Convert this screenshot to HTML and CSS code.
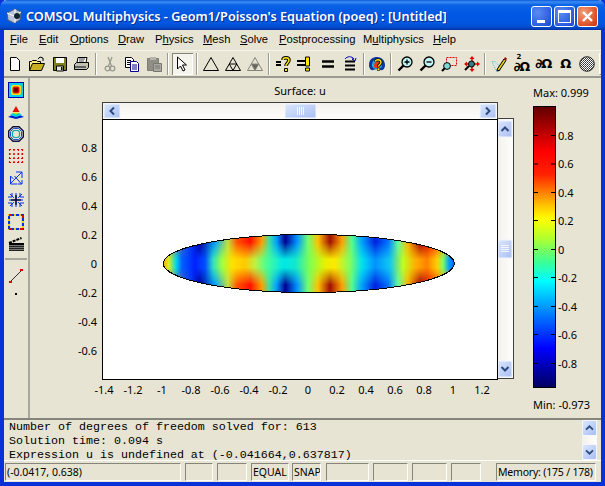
FILE: index.html
```html
<!DOCTYPE html>
<html lang="en">
<head>
<meta charset="utf-8">
<title>COMSOL Multiphysics</title>
<link rel="stylesheet" href="styles.css">
</head>
<body>
<div class="window">
  <header class="titlebar">
    <svg class="appicon" viewBox="0 0 16 16"><path d="M1 5 9 1l6 3-1 8-6 3-6-3z" fill="#b8c4d8" stroke="#50607a"/><path d="M9 1v14M1 5l7 3 7-4" stroke="#fff" fill="none"/><circle cx="11" cy="8" r="3" fill="#123"/></svg>
    <span class="title">COMSOL Multiphysics - Geom1/Poisson's Equation (poeq) : [Untitled]</span>
    <div class="winbtns">
      <span class="wbtn"><i class="wmin"></i></span>
      <span class="wbtn"><i class="wmax"></i></span>
      <span class="wbtn wclose"><svg viewBox="0 0 21 21"><path d="M6 6l9 9M15 6l-9 9" stroke="#fff" stroke-width="2.4"/></svg></span>
    </div>
  </header>
  <nav class="menubar">
    <span class="mi m1"><u>F</u>ile</span>
    <span class="mi m2"><u>E</u>dit</span>
    <span class="mi m3"><u>O</u>ptions</span>
    <span class="mi m4"><u>D</u>raw</span>
    <span class="mi m5">P<u>h</u>ysics</span>
    <span class="mi m6"><u>M</u>esh</span>
    <span class="mi m7"><u>S</u>olve</span>
    <span class="mi m8"><u>P</u>ostprocessing</span>
    <span class="mi m9">M<u>u</u>ltiphysics</span>
    <span class="mi m10"><u>H</u>elp</span>
  </nav>
  <div class="toolbar">
    <span class="tb"><svg viewBox="0 0 16 16"><path d="M3.500 1.500h6l3 3v10h-9z" fill="#fff" stroke="#000"/></svg></span>
    <span class="tb"><svg viewBox="0 0 16 16"><path d="M.5 14.500v-9h2l1-1h4l1 1h3v2" fill="#ffe97a" stroke="#000"/><path d="M.5 14.500l3-7h12l-3 7z" fill="#c8b020" stroke="#000"/><path d="M9 3l2-2 3 1v3" fill="none" stroke="#000"/></svg></span>
    <span class="tb"><svg viewBox="0 0 16 16"><path d="M1.500 1.500h13v13h-13z" fill="#808020" stroke="#000"/><path d="M4 2h8v5H4z" fill="#fff"/><path d="M4.500 10h7v5h-7z" fill="#e8e8d8" stroke="#000"/><path d="M9 11h1.500v3H9z" fill="#000"/></svg></span>
    <span class="tb"><svg viewBox="0 0 16 16"><path d="M4 1.500h9l-1 5H3z" fill="#fff" stroke="#000"/><path d="M5 3h6M5 5h5" stroke="#444"/><path d="M.5 8.500l2-2h12v5l-2 2h-12z" fill="#c0c0b8" stroke="#000"/><path d="M1 11h11" stroke="#000"/><path d="M12 8h2" stroke="#e0e000"/></svg></span>
    <span class="sep"></span>
    <span class="tb"><svg viewBox="0 0 16 16" fill="none" stroke="#9a9a90" stroke-width="1.300"><path d="M6 1l3.500 9M10 1L6.500 10"/><circle cx="5.500" cy="12.500" r="2.300"/><circle cx="10.500" cy="12.500" r="2.300"/></svg></span>
    <span class="tb"><svg viewBox="0 0 16 16"><path d="M1.500 1.500h6l2 2v8h-8z" fill="#fff" stroke="#000"/><path d="M3 4.500h4M3 6.500h4M3 8.500h4" stroke="#000"/><path d="M6.500 5.500h6l2 2v8h-8z" fill="#fff" stroke="#000080"/><path d="M8 9h5M8 11h5M8 13h5" stroke="#000080"/></svg></span>
    <span class="tb"><svg viewBox="0 0 16 16"><path d="M1.500 2.500h11v12h-11z" fill="#8f8f86" stroke="#7c7c74"/><path d="M4 1h6v3H4z" fill="#b4b4aa"/><path d="M7.500 7.500h8v8h-8z" fill="#aaa9a0" stroke="#77776f"/><path d="M9 10h5M9 12h5" stroke="#77776f"/></svg></span>
    <span class="sep"></span>
    <span class="tb tb-on"><svg viewBox="0 0 16 16"><path d="M3.500 1v12l3-3 2.500 5 2-1-2.500-5h4z" fill="#fff" stroke="#000"/></svg></span>
    <span class="sep"></span>
    <span class="tb"><svg viewBox="0 0 16 16"><path d="M8 1.500 15.500 14.500H.5z" fill="none" stroke="#000"/></svg></span>
    <span class="tb"><svg viewBox="0 0 16 16" fill="none" stroke="#000"><path d="M8 1.500 15.500 14.500H.5z"/><path d="M4.300 8h7.400L8 14.500z"/></svg></span>
    <span class="tb"><svg viewBox="0 0 16 16" stroke="#85857c"><path d="M8 1.500 15.500 14.500H.5z" fill="none"/><path d="M4.300 8h7.400L8 14.500z" fill="#66665e"/></svg></span>
    <span class="sep"></span>
    <span class="tb"><svg viewBox="0 0 16 16"><path d="M1 6h5M1 9h5" stroke="#000" stroke-width="2"/><path d="M8 4c0-3 6-3 6 0 0 3-3 3-3 6" fill="none" stroke="#000" stroke-width="3.500"/><path d="M8 4c0-3 6-3 6 0 0 3-3 3-3 6" fill="none" stroke="#ffe800" stroke-width="1.500"/><path d="M9.500 12.500h3v3h-3z" fill="#ffe800" stroke="#000"/></svg></span>
    <span class="tb"><svg viewBox="0 0 16 16"><path d="M0 5h8M0 9h8" stroke="#000" stroke-width="2"/><path d="M8.500 1h4v9h-4zM8.500 12h4v3h-4z" fill="#ffe800" stroke="#000"/></svg></span>
    <span class="tb"><svg viewBox="0 0 16 16"><path d="M2 5.500h12M2 10.500h12" stroke="#000" stroke-width="2.600"/></svg></span>
    <span class="tb"><svg viewBox="0 0 16 16"><path d="M3 5.500h10M3 9.500h10M3 13.500h10" stroke="#000" stroke-width="1.800"/><path d="M3 3c2-3 7-3 9 0l-2 0 3 2 1-3" fill="none" stroke="#0000c0"/></svg></span>
    <span class="sep"></span>
    <span class="tb"><svg viewBox="0 0 16 16"><path d="M0 9C0 3 4 1 8 1s8 3 8 8c0 3-2 6-4 5l-4-1-4 1C2 15 0 12 0 9z" fill="#0038a8"/><path d="M3 9c0-3 2-6 5-6s5 3 5 6-2 4-5 4-5-1-5-4z" fill="#18b0e0"/><path d="M5 10c0-2 1-5 3-5s3 3 3 5-1 2-3 2-3 0-3-2z" fill="#f03010"/><path d="M6.500 5.500c0-2.500 5.500-2.500 5.500 1 0 2-2.500 2-2.500 4" fill="none" stroke="#000" stroke-width="3"/><path d="M6.500 5.500c0-2.500 5.500-2.500 5.500 1 0 2-2.500 2-2.500 4" fill="none" stroke="#ffe000" stroke-width="1.400"/><path d="M8.300 12h2.500v2.500H8.300z" fill="#ffe000" stroke="#000" stroke-width=".6"/></svg></span>
    <span class="sep"></span>
    <span class="tb"><svg viewBox="0 0 16 16"><circle cx="10" cy="6" r="5" fill="#bff4f4" stroke="#000" stroke-width="1.300"/><path d="M1.500 14.500 6.500 9.500" stroke="#000" stroke-width="2.400"/><path d="M7.500 6h5M10 3.500v5" stroke="#000" stroke-width="1.300"/></svg></span>
    <span class="tb"><svg viewBox="0 0 16 16"><circle cx="10" cy="6" r="5" fill="#bff4f4" stroke="#000" stroke-width="1.300"/><path d="M1.500 14.500 6.500 9.500" stroke="#000" stroke-width="2.400"/><path d="M7.500 6h5" stroke="#000" stroke-width="1.300"/></svg></span>
    <span class="tb"><svg viewBox="0 0 16 16"><path d="M5.500 1.500h10v8h-10z" fill="none" stroke="#e00000" stroke-dasharray="2 1"/><circle cx="6" cy="10" r="3.400" fill="#7fd8d8" stroke="#000"/><path d="M1 15l3-3" stroke="#000" stroke-width="2.200"/></svg></span>
    <span class="tb"><svg viewBox="0 0 16 16"><path d="M8 0 5.500 3h5zM8 16l-2.500-3h5zM0 8l3-2.500v5zM16 8l-3-2.500v5z" fill="#e00000"/><path d="M8 2v12M2 8h12" stroke="#e00000" stroke-width="1.500"/><circle cx="7.500" cy="8" r="3" fill="#3a7a80" stroke="#000"/><path d="M1 14l4-4" stroke="#000" stroke-width="2"/></svg></span>
    <span class="sep"></span>
    <span class="tb"><svg viewBox="0 0 16 16"><path d="M1 5.500l4 9h4l-2-6-3-3z" fill="none" stroke="#30c8d8" stroke-dasharray="1 1"/><path d="M6 13.500 13 3l2 1.500L8 15z" fill="#e8d000" stroke="#000"/><path d="M13 3l1-2 2 1.500-1 2z" fill="#a01010"/><path d="M6 13.500 5.500 15.500 8 15z" fill="#000"/></svg></span>
    <span class="tb tb-n tb-stack"><span class="sup">2</span><span class="glyph gl-low">∂Ω</span></span>
    <span class="tb tb-n"><span class="glyph">∂Ω</span></span>
    <span class="tb tb-n"><span class="glyph">Ω</span></span>
    <span class="tb tb-n"><svg viewBox="0 0 16 16"><defs><pattern id="dots" width="2" height="2" patternUnits="userSpaceOnUse"><rect width="2" height="2" fill="#fff"/><rect width="1" height="1" fill="#333"/><rect x="1" y="1" width="1" height="1" fill="#555"/></pattern></defs><circle cx="8" cy="8" r="7.300" fill="url(#dots)" stroke="#000" stroke-width=".8"/></svg></span>
    <span class="tb-cut"></span>
  </div>
  <div class="middle">
    <aside class="sidebar">
      <span class="sb"><svg viewBox="0 0 16 16"><rect width="16" height="16" fill="#0000b0"/><rect x="1" y="1" width="14" height="14" fill="#00d0e8"/><rect x="3" y="3" width="10" height="10" rx="2" fill="#f0e020"/><rect x="4.500" y="4.500" width="7" height="7" rx="2" fill="#e01000"/><rect x="6" y="6" width="4" height="4" fill="#700000"/></svg></span>
      <span class="sb"><svg viewBox="0 0 16 16"><path d="M0 13 8 15l8-2-4-2H4z" fill="#0020d0"/><path d="M2 11 8 13l6-2-3-2H5z" fill="#00d0e0"/><path d="M4 9h8L8 11z" fill="#40e060"/><path d="M4.500 8.500h7L8 10z" fill="#ffd800"/><path d="M8 2 11.500 8h-7z" fill="#e01000"/></svg></span>
      <span class="sb"><svg viewBox="0 0 16 16" fill="none"><path d="M5 .7h6L15.300 5v6L11 15.300H5L.7 11V5z" stroke="#101040" stroke-width="1.400"/><path d="M5.500 2.500h5l3 3v5l-3 3h-5l-3-3v-5z" stroke="#2050d0"/><path d="M6 4.500h4L11.500 6v4L10 11.500H6L4.500 10V6z" stroke="#10a8a0" stroke-width="1.200"/></svg></span>
      <span class="sb"><svg viewBox="0 0 16 16" fill="none" stroke="#e00000" stroke-width="1.100" stroke-dasharray="2 2"><path d="M1 1.500h14M1 6h14M1 10.500h14M1 14.500h14M1.500 1v14M6 1v14M10.500 1v14M14.500 1v14"/></svg></span>
      <span class="sb"><svg viewBox="0 0 16 16" fill="none" stroke="#0030f0"><path d="M2.500 6v8h7M2 14 14 2M14 2H8M14 2v6M6.500 6l7 8M14 14h-4M14 14v-4M2.500 6l3 3"/></svg></span>
      <span class="sb"><svg viewBox="0 0 16 16" fill="none" stroke="#0030f0"><path d="M1 8h14M8 1v14M2 2l4 4M14 2l-4 4M2 14l4-4M14 14l-4-4M4 1v4H0M12 1v4h4M4 15v-4H0M12 15v-4h4"/><path d="M8 3v10M3 8h10" stroke="#101040" stroke-width="1.600"/></svg></span>
      <span class="sb"><svg viewBox="0 0 16 16" fill="none" stroke-width="2.200" stroke-dasharray="3 2"><path d="M1 1h14v14H1z" stroke="#e8d000"/><path d="M1 1h14v14H1z" stroke="#0030e0" stroke-dashoffset="3"/><path d="M1 1h4M15 1v4M1 15h4M15 15h-4" stroke="#e00000"/></svg></span>
      <span class="sb"><svg viewBox="0 0 16 16"><path d="M1 7 13.500 2" fill="none" stroke="#000" stroke-width="2" stroke-dasharray="3 1"/><path d="M1 7h15v2H1z" fill="#000"/><path d="M1 9h15v6H1z" fill="#777"/><path d="M1 10h15v1H1zM1 12h15v1H1zM1 14h15v1H1z" fill="#222"/></svg></span>
      <span class="sbsep"></span>
      <span class="sb"><svg viewBox="0 0 16 16"><path d="M2 14 14 2" stroke="#000" stroke-width=".8"/><path d="M1 13h3v2H1zM12 1h3v2h-3z" fill="#e00000"/></svg></span>
      <span class="sb sb-dot"><svg viewBox="0 0 16 16"><path d="M7 7h2v2H7z" fill="#000"/></svg></span>
    </aside>
    <main class="canvas">
      <svg class="plot" viewBox="30 78 571 340" role="img">
        <defs>
          <linearGradient id="mid" gradientUnits="userSpaceOnUse" x1="163" x2="454" y1="0" y2="0">
            <stop offset="0" stop-color="#ffa000"/><stop offset=".02" stop-color="#d8f020"/><stop offset=".045" stop-color="#00d8e8"/><stop offset=".065" stop-color="#0060ff"/><stop offset=".11" stop-color="#0020ff"/><stop offset=".145" stop-color="#0050ff"/><stop offset=".172" stop-color="#30e0c0"/><stop offset=".203" stop-color="#a0ff40"/><stop offset=".237" stop-color="#ffe000"/><stop offset=".282" stop-color="#ffc800"/><stop offset=".316" stop-color="#c0f040"/><stop offset=".354" stop-color="#50ff90"/><stop offset=".412" stop-color="#00e8e8"/><stop offset=".454" stop-color="#10e8d0"/><stop offset=".505" stop-color="#80ff50"/><stop offset=".557" stop-color="#e8f000"/><stop offset=".591" stop-color="#ffe800"/><stop offset=".643" stop-color="#80ff60"/><stop offset=".684" stop-color="#00e0f0"/><stop offset=".729" stop-color="#0090ff"/><stop offset=".78" stop-color="#10c8f0"/><stop offset=".825" stop-color="#c0ff20"/><stop offset=".866" stop-color="#ffb000"/><stop offset=".907" stop-color="#ff8000"/><stop offset=".942" stop-color="#ffd000"/><stop offset=".962" stop-color="#80ff60"/><stop offset=".983" stop-color="#00a0ff"/><stop offset="1" stop-color="#0060ff"/>
          </linearGradient>
          <linearGradient id="edge" gradientUnits="userSpaceOnUse" x1="163" x2="454" y1="0" y2="0">
            <stop offset="0" stop-color="#ffa000"/><stop offset=".093" stop-color="#0040ff"/><stop offset=".127" stop-color="#000090"/><stop offset=".179" stop-color="#00a0ff"/><stop offset=".223" stop-color="#c0e040"/><stop offset=".255" stop-color="#ff5000"/><stop offset=".3" stop-color="#ff1000"/><stop offset=".34" stop-color="#ffa000"/><stop offset=".365" stop-color="#40e0a0"/><stop offset=".39" stop-color="#00a0ff"/><stop offset=".42" stop-color="#000090"/><stop offset=".46" stop-color="#0090ff"/><stop offset=".498" stop-color="#70ff70"/><stop offset=".533" stop-color="#ffc000"/><stop offset=".574" stop-color="#a01000"/><stop offset=".615" stop-color="#ffa000"/><stop offset=".649" stop-color="#50ff90"/><stop offset=".684" stop-color="#00a0ff"/><stop offset=".729" stop-color="#0020e0"/><stop offset=".773" stop-color="#0070ff"/><stop offset=".808" stop-color="#60ffa0"/><stop offset=".842" stop-color="#ffb000"/><stop offset=".883" stop-color="#a00000"/><stop offset=".924" stop-color="#ff2000"/><stop offset=".97" stop-color="#ffa000"/><stop offset="1" stop-color="#ffa000"/>
          </linearGradient>
          <linearGradient id="fade" gradientUnits="userSpaceOnUse" x1="0" x2="0" y1="234" y2="293">
            <stop offset=".14" stop-color="#fff"/><stop offset=".43" stop-color="#000"/><stop offset=".57" stop-color="#000"/><stop offset=".86" stop-color="#fff"/>
          </linearGradient>
          <mask id="edgemask" maskUnits="userSpaceOnUse" x="160" y="230" width="300" height="68"><rect x="160" y="230" width="300" height="68" fill="url(#fade)"/></mask>
          <clipPath id="shape"><ellipse cx="308.800" cy="263.500" rx="145.500" ry="29"/></clipPath>
          <linearGradient id="jet" x1="0" x2="0" y1="0" y2="1">
            <stop offset="0" stop-color="#600000"/><stop offset=".16" stop-color="#ff0000"/><stop offset=".24" stop-color="#ff2000"/><stop offset=".35" stop-color="#ffc000"/><stop offset=".4" stop-color="#ffff00"/><stop offset=".47" stop-color="#b0ff30"/><stop offset=".55" stop-color="#40ff90"/><stop offset=".62" stop-color="#00ffff"/><stop offset=".75" stop-color="#0070ff"/><stop offset=".86" stop-color="#0000ff"/><stop offset="1" stop-color="#000060"/>
          </linearGradient>
          <linearGradient id="sbtn" x1="0" x2="1" y1="0" y2="1"><stop offset="0" stop-color="#dbe6fd"/><stop offset="1" stop-color="#a9bff2"/></linearGradient>
          <linearGradient id="htrack" x1="0" x2="0" y1="0" y2="1"><stop offset="0" stop-color="#f3f1ec"/><stop offset="1" stop-color="#fefefb"/></linearGradient>
          <linearGradient id="vtrack" x1="0" x2="1" y1="0" y2="0"><stop offset="0" stop-color="#f3f1ec"/><stop offset="1" stop-color="#fefefb"/></linearGradient>
        </defs>
        <text class="t" x="300" y="95" text-anchor="middle">Surface: u</text>

        <rect class="frame" x="102.500" y="102.500" width="395" height="17" fill="url(#htrack)"/>
        <rect class="sbb" x="104" y="104" width="16" height="14"/><path class="chev" d="M114 107.500l-3.500 3.500 3.500 3.500"/>
        <rect class="sbb" x="480" y="104" width="16" height="14"/><path class="chev" d="M486 107.500l3.500 3.500-3.500 3.500"/>
        <rect class="sbb" x="285" y="104" width="31" height="14"/><path class="grip" d="M297.500 107v8M299.500 107v8M301.500 107v8M303.500 107v8"/>

        <rect class="frame" x="497.500" y="118.500" width="16" height="260" fill="url(#vtrack)"/>
        <rect class="sbb" x="498" y="121" width="14" height="16"/><path class="chev" d="M501.500 131l3.500-3.500 3.500 3.500"/>
        <rect class="sbb" x="498" y="361" width="14" height="16"/><path class="chev" d="M501.500 367l3.500 3.500 3.500-3.500"/>
        <rect class="sbb" x="498" y="240" width="14" height="18"/><path class="grip" d="M501 245.500h8M501 247.500h8M501 249.500h8M501 251.500h8"/>

        <rect class="field" x="102.500" y="119.500" width="395" height="260"/>
        <g clip-path="url(#shape)">
          <rect x="160" y="230" width="300" height="68" fill="url(#mid)"/>
          <rect x="160" y="230" width="300" height="68" fill="url(#edge)" mask="url(#edgemask)"/>
        </g>
        <ellipse class="outline" cx="308.800" cy="263.500" rx="145.500" ry="29"/>

        <g class="t" text-anchor="end">
          <text x="97" y="152">0.8</text><text x="97" y="181">0.6</text><text x="97" y="210">0.4</text><text x="97" y="239">0.2</text>
          <text x="97" y="268">0</text><text x="97" y="297">-0.2</text><text x="97" y="326">-0.4</text><text x="97" y="355">-0.6</text>
        </g>
        <g class="t" text-anchor="middle">
          <text x="104" y="394">-1.4</text><text x="133" y="394">-1.2</text><text x="162" y="394">-1</text><text x="191" y="394">-0.8</text><text x="220" y="394">-0.6</text><text x="249" y="394">-0.4</text><text x="278" y="394">-0.2</text><text x="308" y="394">0</text><text x="337" y="394">0.2</text><text x="366" y="394">0.4</text><text x="395" y="394">0.6</text><text x="424" y="394">0.8</text><text x="453" y="394">1</text><text x="482" y="394">1.2</text>
        </g>

        <text class="t" x="533" y="97">Max: 0.999</text>
        <rect x="533.500" y="106.500" width="22" height="281" fill="url(#jet)" stroke="#000"/>
        <path class="ticks" d="M533 135.500h5M551 135.500h5M533 164h5M551 164h5M533 192.500h5M551 192.500h5M533 220.500h5M551 220.500h5M533 249.500h5M551 249.500h5M533 277.500h5M551 277.500h5M533 306.500h5M551 306.500h5M533 334.500h5M551 334.500h5M533 363.500h5M551 363.500h5"/>
        <g class="t">
          <text x="558" y="140">0.8</text><text x="558" y="168">0.6</text><text x="558" y="197">0.4</text><text x="558" y="225">0.2</text><text x="558" y="254">0</text><text x="558" y="282">-0.2</text><text x="558" y="311">-0.4</text><text x="558" y="339">-0.6</text><text x="558" y="368">-0.8</text>
        </g>
        <text class="t" x="533" y="409">Min: -0.973</text>
      </svg>
    </main>
  </div>
  <section class="log">
    <pre class="logtext">Number of degrees of freedom solved for: 613
Solution time: 0.094 s
Expression u is undefined at (-0.041664,0.637817)</pre>
    <div class="logscroll">
      <span class="lsb"><svg viewBox="0 0 15 16"><path d="M3.500 10 7.500 6l4 4" fill="none" stroke="#2d4a80" stroke-width="2"/></svg></span>
      <span class="lsb"><svg viewBox="0 0 15 16"><path d="M3.500 6l4 4 4-4" fill="none" stroke="#2d4a80" stroke-width="2"/></svg></span>
    </div>
  </section>
  <footer class="status">
    <span class="cell c1">(-0.0417, 0.638)</span>
    <span class="cell c2"></span>
    <span class="cell c3"></span>
    <span class="cell c4">EQUAL</span>
    <span class="cell c5">SNAP</span>
    <span class="cell c6"></span>
    <span class="cell c7"></span>
    <span class="cell c8"></span>
    <span class="cell c9"></span>
    <span class="cell c10">Memory: (175 / 178)</span>
  </footer>
</div>
</body>
</html>
```
FILE: styles.css
```css
html, body {
  margin: 0;
  padding: 0;
  background: #e7e4d3;
  overflow: hidden;
}
.window {
  width: 605px;
  height: 486px;
  box-sizing: border-box;
  display: flex;
  flex-direction: column;
  background: #e7e4d3;
  border-left: 4px solid #0831d9;
  border-right: 4px solid #0831d9;
  border-bottom: 4px solid #0831d9;
  font: 11px "Noto Sans", sans-serif;
  color: #000;
}
.titlebar {
  height: 30px;
  box-sizing: border-box;
  margin: 0 -4px;
  padding: 2px 5px 0 6px;
  flex: none;
  display: flex;
  align-items: center;
  gap: 4px;
  border-radius: 7px 7px 0 0;
  background: linear-gradient(#0a5ad8 0, #3d8cf5 2px, #0a62e6 5px, #0058e4 14px, #0256e0 24px, #0246c4 28px, #0331a0 30px);
}
.appicon { width: 16px; height: 16px; flex: none; }
.title {
  font: 600 12.700px "Noto Sans", sans-serif;
  color: #fff;
  text-shadow: 1px 1px 0 #0a2a90;
  white-space: nowrap;
}
.winbtns { margin-left: auto; display: flex; gap: 2px; padding-right: 2px; }
.wbtn {
  width: 21px;
  height: 21px;
  box-sizing: border-box;
  border: 1px solid #fff;
  border-radius: 3px;
  position: relative;
  background: radial-gradient(circle at 30% 30%, #5c8cf0, #2a5ce0 70%, #1c48c8);
}
.wclose { background: radial-gradient(circle at 30% 30%, #f0a080, #e05a30 60%, #c83010); }
.wclose svg { position: absolute; left: -1px; top: -1px; width: 21px; height: 21px; }
.wmin { position: absolute; left: 5px; bottom: 3px; width: 8px; height: 3px; background: #fff; }
.wmax { position: absolute; left: 3px; top: 3px; width: 13px; height: 13px; box-sizing: border-box; border: 1px solid #fff; border-top-width: 3px; }

.menubar {
  height: 20px;
  box-sizing: border-box;
  padding: 0 0 2px 6px;
  flex: none;
  display: flex;
  align-items: center;
  font: 11.200px "Liberation Sans", sans-serif;
}
.mi { flex: none; }
.mi u { text-decoration-thickness: 1px; }
.m1 { width: 29px; }
.m2 { width: 31px; }
.m3 { width: 48px; }
.m4 { width: 37px; }
.m5 { width: 48px; }
.m6 { width: 37px; }
.m7 { width: 39px; }
.m8 { width: 84px; }
.m9 { width: 70px; }
.m10 { width: 30px; }

.toolbar {
  height: 28px;
  flex: none;
  box-sizing: border-box;
  display: flex;
  align-items: center;
  border-top: 1px solid #f6f5ec;
  border-bottom: 2px solid #9a9a90;
}
.tb {
  width: 22.300px;
  height: 22px;
  flex: none;
  display: flex;
  align-items: center;
  justify-content: center;
}
.tb svg { width: 16px; height: 16px; display: block; }
.tb-n { width: 22px; }
.tb-stack { flex-direction: column; }
.tb-on {
  width: 21px;
  margin: 0 1.600px 0 1.500px;
  background: #f5f4ec;
  box-shadow: inset 1px 1px 0 #85857c, inset -1px -1px 0 #fff;
}
.sep {
  width: 2px;
  height: 22px;
  margin: 0 1.600px;
  flex: none;
  background: #9a9a90;
  border-right: 1px solid #fff;
  box-sizing: border-box;
}
.glyph { font: 700 13px/14px "DejaVu Sans", sans-serif; letter-spacing: -1px; }
.gl-low { line-height: 13px; font-size: 12.500px; }
.sup { font: 700 7px/6px "DejaVu Sans", sans-serif; margin-left: -5px; }
.tb-cut { width: 3px; height: 20px; margin-left: 1px; border-left: 1px solid #fff; border-top: 1px solid #fff; border-bottom: 1px solid #85857c; }

.middle {
  flex: 1;
  min-height: 0;
  display: flex;
}
.sidebar {
  width: 26px;
  flex: none;
  box-sizing: border-box;
  border-right: 2px solid #a8a89c;
  display: flex;
  flex-direction: column;
  align-items: center;
  padding-top: 1px;
}
.sb { width: 22px; height: 22px; flex: none; display: flex; align-items: center; justify-content: center; }
.sb svg { width: 16px; height: 16px; display: block; }
.sb-dot { margin-top: -4px; }
.sbsep { width: 22px; height: 2px; margin: 3px 0 5px; background: #a8a89c; flex: none; }
.canvas { flex: 1; min-width: 0; }
.plot { display: block; width: 571px; height: 340px; }
.t { font: 11px "Noto Sans", sans-serif; fill: #000; }
.frame { stroke: #404040; }
.field { fill: #fff; stroke: #000; }
.outline { fill: none; stroke: #000; shape-rendering: crispEdges; }
.sbb { fill: url(#sbtn); stroke: #f4f6fd; }
.chev { fill: none; stroke: #2d4a80; stroke-width: 2; }
.grip { fill: none; stroke: #f4f6fd; }
.ticks { stroke: #000; fill: none; }

.log {
  height: 43px;
  flex: none;
  box-sizing: border-box;
  border-top: 2px solid #85857c;
  border-bottom: 1px solid #fff;
  display: flex;
}
.logtext {
  flex: 1;
  margin: 0;
  padding: 0 0 0 5px;
  font: 11.670px/14px "Liberation Mono", monospace;
  color: #000;
}
.logscroll {
  width: 15px;
  margin-right: 4px;
  flex: none;
  display: flex;
  flex-direction: column;
  justify-content: space-between;
  background: linear-gradient(90deg, #f3f1ec, #fefefb);
}
.lsb {
  height: 16px;
  display: block;
  box-sizing: border-box;
  border: 1px solid #f4f6fd;
  border-radius: 2px;
  background: linear-gradient(135deg, #dbe6fd, #a9bff2);
}
.lsb svg { display: block; width: 13px; height: 14px; }

.status {
  height: 21px;
  flex: none;
  box-sizing: border-box;
  display: flex;
  align-items: center;
  font-size: 10.500px;
  padding-left: 1px;
}
.cell {
  height: 18px;
  box-sizing: border-box;
  flex: none;
  border-top: 1px solid #85857c;
  border-left: 1px solid #85857c;
  border-bottom: 1px solid #fff;
  border-right: 1px solid #fff;
  padding-left: 1px;
  line-height: 16px;
  white-space: nowrap;
  overflow: hidden;
}
.c1 { width: 176px; }
.c2 { width: 28px; margin-left: 4px; }
.c3 { width: 30px; margin-left: 4px; }
.c4 { width: 38px; margin-left: 4px; }
.c5 { width: 29px; margin-left: 3px; }
.c6 { width: 43px; margin-left: 5px; }
.c7 { width: 35px; margin-left: 4px; }
.c8 { width: 35px; margin-left: 4px; }
.c9 { width: 30px; margin-left: 4px; }
.c10 { width: 100px; margin-left: 15px; letter-spacing: -.2px; }
```
